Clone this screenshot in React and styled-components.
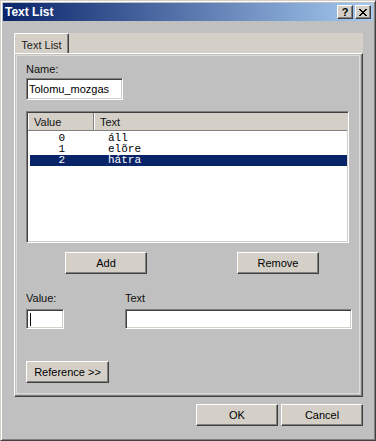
import React from 'react';
import styled, { createGlobalStyle } from 'styled-components';

const Global = createGlobalStyle`
  html, body {
    margin: 0;
    padding: 0;
    background: #c0c0c0;
  }
`;

const rows = [
  { value: 0, text: 'áll' },
  { value: 1, text: 'elõre' },
  { value: 2, text: 'hátra', selected: true },
];

function CloseGlyph() {
  return (
    <svg width="8" height="7" viewBox="0 0 8 7" shapeRendering="crispEdges">
      <path d="M0 0h2v1H0zM6 0h2v1H6zM1 1h2v1H1zM5 1h2v1H5zM2 2h4v1H2zM3 3h2v1H3zM2 4h4v1H2zM1 5h2v1H1zM5 5h2v1H5zM0 6h2v1H0zM6 6h2v1H6z" fill="#000" />
    </svg>
  );
}

function App() {
  return (
    <>
      <Global />
      <Window>
        <TitleBar>
          <Title>Text List</Title>
          <TitleButtons>
            <CaptionButton>?</CaptionButton>
            <CaptionButton><CloseGlyph /></CaptionButton>
          </TitleButtons>
        </TitleBar>

        <Body>
          <TabStrip>
            <Tab>Text List</Tab>
          </TabStrip>
          <TabPage>
            <Page>
              <Label $top={7}>Name:</Label>
              <TextBox $width={97} $height={22} $top={2}>Tolomu_mozgas</TextBox>

              <ListView>
                <ListHeader>
                  <HeaderCell $width={66}>Value</HeaderCell>
                  <HeaderCell $last>Text</HeaderCell>
                </ListHeader>
                <ListRows>
                  {rows.map((r) => (
                    <Row key={r.value} $selected={r.selected}>
                      <ValueCell>{r.value}</ValueCell>
                      <TextCell>{r.text}</TextCell>
                    </Row>
                  ))}
                </ListRows>
              </ListView>

              <ButtonRow>
                <Button $width={82} $left={39}>Add</Button>
                <Button $width={82} $left={90}>Remove</Button>
              </ButtonRow>

              <FieldRow>
                <Field>
                  <Label>Value:</Label>
                  <TextBox $width={38} $height={20} $top={4}>
                    <Caret />
                  </TextBox>
                </Field>
                <Field $left={61}>
                  <Label>Text</Label>
                  <TextBox $width={227} $height={20} $top={4} />
                </Field>
              </FieldRow>

              <Button $width={83} $top={32}>Reference &gt;&gt;</Button>
            </Page>
          </TabPage>

          <Footer>
            <Button $width={82}>OK</Button>
            <Button $width={82}>Cancel</Button>
          </Footer>
        </Body>
      </Window>
    </>
  );
}

const Window = styled.div`
  width: 376px;
  height: 441px;
  box-sizing: border-box;
  display: flex;
  flex-direction: column;
  padding: 2px;
  background: #c0c0c0;
  border: 1px solid;
  border-color: #d4d0c8 #404040 #404040 #d4d0c8;
  box-shadow: inset 1px 1px #fff, inset -1px -1px #808080;
  font-family: 'Liberation Sans', Arial, sans-serif;
  font-size: 11px;
  color: #000;
`;

const TitleBar = styled.div`
  height: 18px;
  display: flex;
  align-items: center;
  padding: 0 2px;
  background: linear-gradient(to right, #0a246a, #a6caf0);
`;

const Title = styled.div`
  color: #fff;
  font-weight: bold;
  font-size: 12px;
  line-height: 14px;
`;

const TitleButtons = styled.div`
  margin-left: auto;
  display: flex;
  gap: 2px;
`;

const CaptionButton = styled.div`
  width: 16px;
  height: 14px;
  box-sizing: border-box;
  display: flex;
  align-items: center;
  justify-content: center;
  background: #d4d0c8;
  border: 1px solid;
  border-color: #fff #404040 #404040 #fff;
  box-shadow: inset -1px -1px #808080;
  font-weight: bold;
  font-size: 11px;
  line-height: 11px;
`;

const Body = styled.div`
  display: flex;
  flex-direction: column;
  padding: 12px 10px 0 11px;
`;

const TabStrip = styled.div`
  height: 20px;
  display: flex;
  align-items: stretch;
  background: #d4d0c8;
`;

const Tab = styled.div`
  width: 55px;
  box-sizing: border-box;
  display: flex;
  align-items: center;
  justify-content: center;
  padding-top: 2px;
  border-left: 1px solid #fff;
  border-top: 1px solid #fff;
  border-right: 1px solid #404040;
  box-shadow: inset -1px 0 #808080;
  border-top-left-radius: 2px;
  border-top-right-radius: 2px;
  background: #d4d0c8;
  color: #222;
`;

const TabPage = styled.div`
  height: 344px;
  box-sizing: border-box;
  display: flex;
  border: 1px solid;
  border-color: #fff #404040 #404040 #fff;
  box-shadow: inset -1px -1px #808080;
`;

const Page = styled.div`
  flex: 1;
  margin: 1px 2px 2px 1px;
  border: 1px solid #dedbd5;
  padding-left: 9px;
  display: flex;
  flex-direction: column;
  align-items: flex-start;
`;

const Label = styled.div`
  line-height: 13px;
  margin-top: ${(p) => p.$top || 0}px;
  color: #111;
`;

const TextBox = styled.div`
  width: ${(p) => p.$width}px;
  height: ${(p) => p.$height}px;
  margin-top: ${(p) => p.$top || 0}px;
  box-sizing: border-box;
  display: flex;
  align-items: center;
  padding-left: 2px;
  background: #fff;
  border: 1px solid;
  border-color: #808080 #fff #fff #808080;
  box-shadow: inset 1px 1px #404040, inset -1px -1px #d4d0c8;
`;

const Caret = styled.span`
  width: 1px;
  height: 13px;
  margin-left: 1px;
  background: #000;
`;

const ListView = styled.div`
  width: 323px;
  height: 132px;
  margin-top: 11px;
  box-sizing: border-box;
  display: flex;
  flex-direction: column;
  background: #fff;
  border: 1px solid;
  border-color: #808080 #fff #fff #808080;
  box-shadow: inset 1px 1px #404040, inset -1px -1px #d4d0c8;
  padding: 1px;
`;

const ListHeader = styled.div`
  height: 18px;
  box-sizing: border-box;
  display: flex;
  background: #d4d0c8;
  border-bottom: 1px solid #808080;
`;

const HeaderCell = styled.div`
  ${(p) => (p.$last ? 'flex: 1;' : `width: ${p.$width}px;`)}
  box-sizing: border-box;
  display: flex;
  align-items: center;
  padding-left: 5px;
  border-left: 1px solid #fff;
  border-right: ${(p) => (p.$last ? 'none' : '1px solid #808080')};
  color: #111;
`;

const ListRows = styled.div`
  padding: 2px 0 0 2px;
  display: flex;
  flex-direction: column;
`;

const Row = styled.div`
  height: 11px;
  display: flex;
  align-items: center;
  font-family: 'Liberation Mono', 'Courier New', monospace;
  font-size: 11px;
  line-height: 11px;
  background: ${(p) => (p.$selected ? '#0a246a' : 'transparent')};
  color: ${(p) => (p.$selected ? '#fff' : '#000')};
`;

const ValueCell = styled.div`
  width: 35px;
  text-align: right;
`;

const TextCell = styled.div`
  padding-left: 43px;
`;

const ButtonRow = styled.div`
  margin-top: 9px;
  display: flex;
`;

const Button = styled.div`
  width: ${(p) => p.$width}px;
  height: 22px;
  margin-left: ${(p) => p.$left || 0}px;
  margin-top: ${(p) => p.$top || 0}px;
  box-sizing: border-box;
  display: flex;
  align-items: center;
  justify-content: center;
  background: #d4d0c8;
  border: 1px solid;
  border-color: #fff #404040 #404040 #fff;
  box-shadow: inset -1px -1px #808080;
  color: #000;
`;

const FieldRow = styled.div`
  margin-top: 18px;
  display: flex;
`;

const Field = styled.div`
  display: flex;
  flex-direction: column;
  margin-left: ${(p) => p.$left || 0}px;
`;

const Footer = styled.div`
  margin-top: 7px;
  display: flex;
  justify-content: flex-end;
  gap: 3px;
`;

export default App;
